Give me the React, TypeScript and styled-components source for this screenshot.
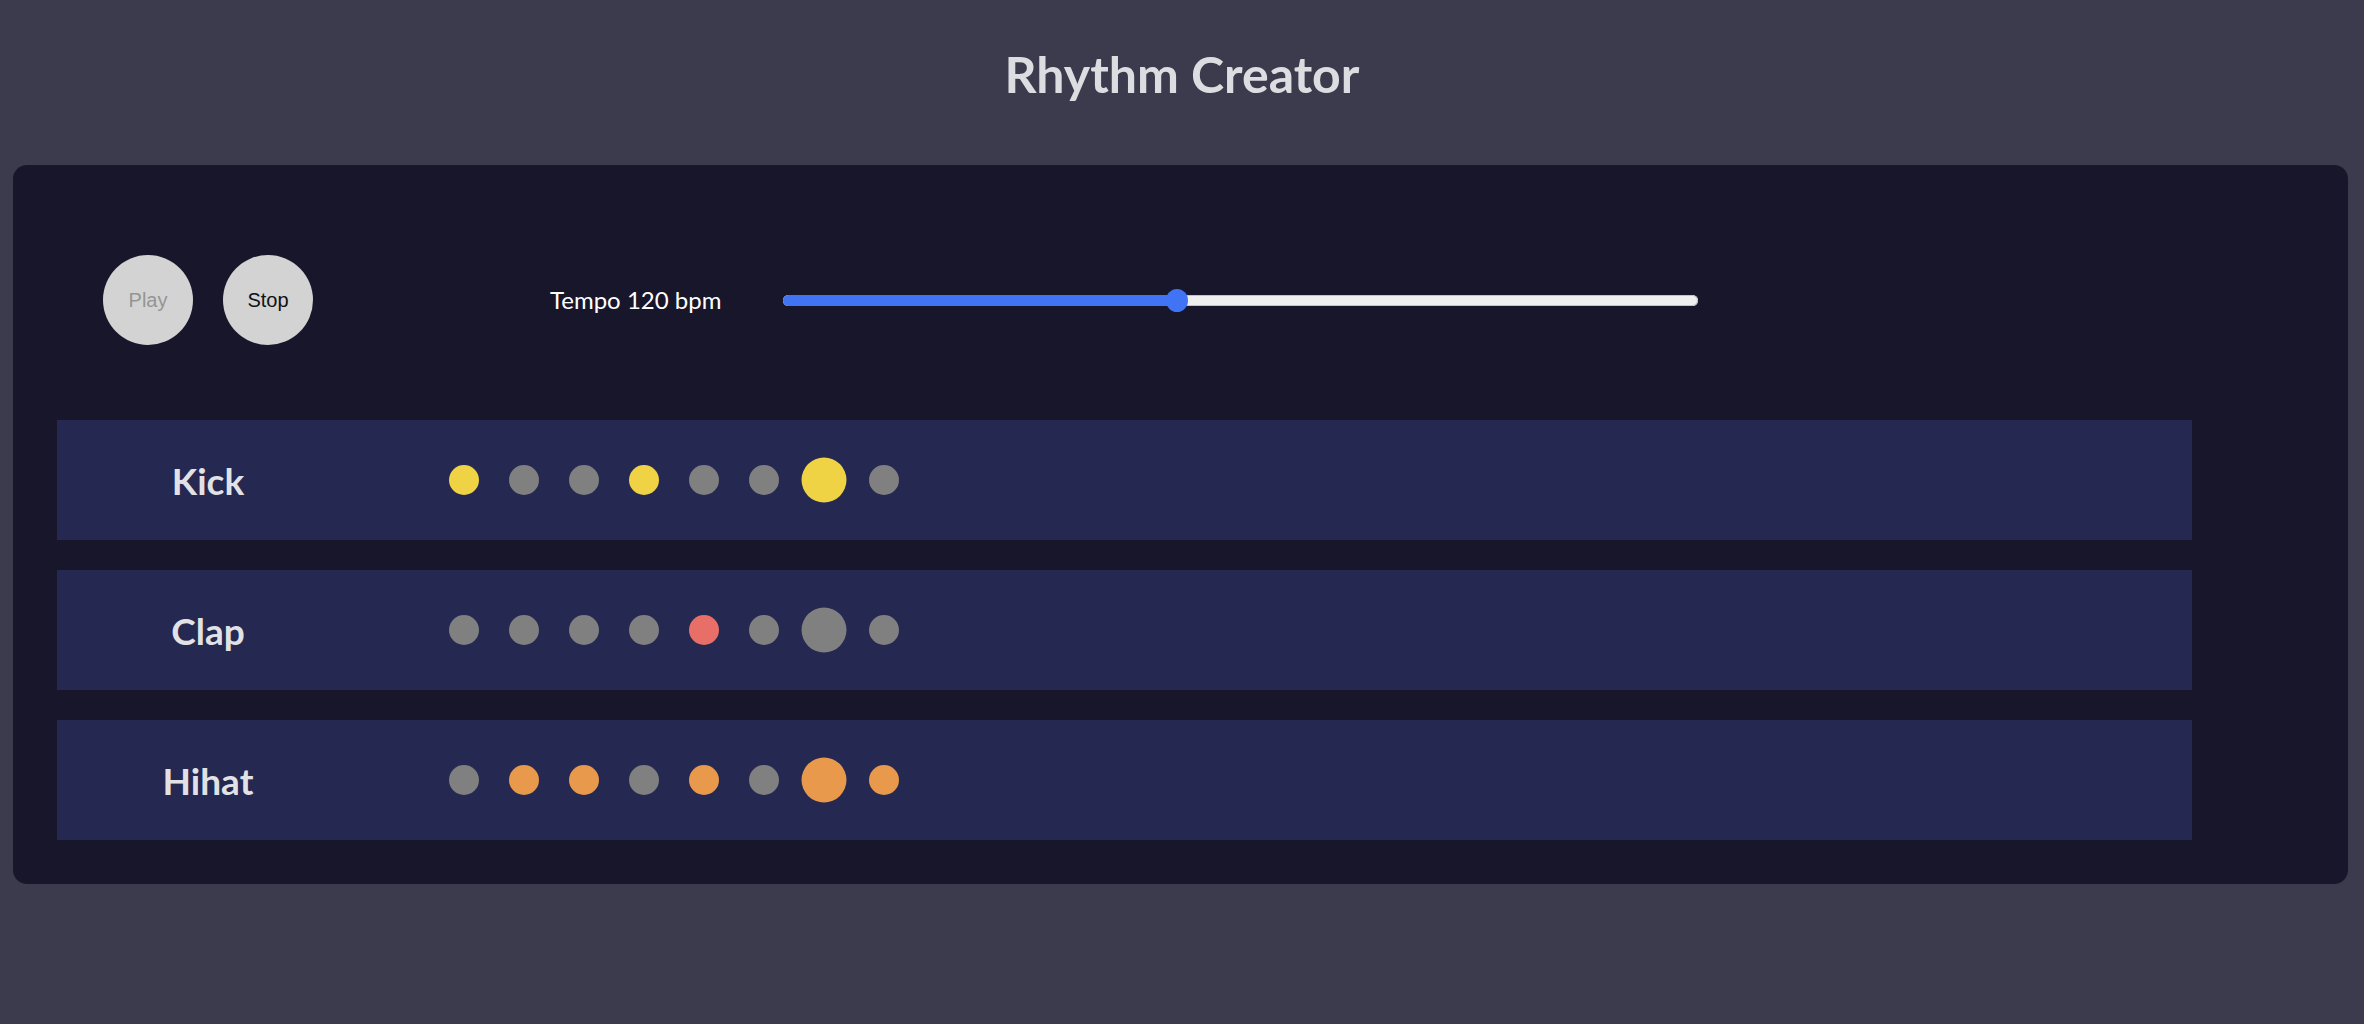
import React from "react";
import styled, { createGlobalStyle } from "styled-components";

const GlobalStyle = createGlobalStyle`
  html, body {
    margin: 0;
    padding: 0;
    background: #3c3b4e;
    font-family: "Lato", "Open Sans", sans-serif;
  }
`;

const Page = styled.div`
  width: 2364px;
  min-height: 1024px;
  display: flex;
  flex-direction: column;
`;

const Header = styled.header`
  height: 165px;
  display: flex;
  justify-content: center;
  align-items: flex-start;
`;

const Title = styled.h1`
  margin: 44px 0 0;
  font-size: 50px;
  line-height: 60px;
  font-weight: 700;
  color: #dcdde0;
`;

const Panel = styled.main`
  margin: 0 16px 0 13px;
  background: #17162a;
  border-radius: 14px;
  padding: 90px 44px 44px;
  display: flex;
  flex-direction: column;
`;

const Controls = styled.div`
  display: flex;
  align-items: center;
  padding-left: 46px;
  height: 90px;
  margin-bottom: 75px;
`;

const RoundButton = styled.button<{ $muted?: boolean }>`
  width: 90px;
  height: 90px;
  border-radius: 50%;
  border: none;
  padding: 0;
  background: #d3d3d3;
  color: ${(p) => (p.$muted ? "#959595" : "#111111")};
  font-family: "Liberation Sans", Arial, sans-serif;
  font-size: 20px;
  & + & {
    margin-left: 30px;
  }
`;

const TempoLabel = styled.span`
  margin-left: 237px;
  color: #ffffff;
  font-size: 24px;
  line-height: 30px;
  width: 172px;
  white-space: nowrap;
`;

const Track = styled.div`
  position: relative;
  margin-left: 61px;
  width: 915px;
  height: 11px;
  border-radius: 6px;
  background: #efefef;
  box-shadow: inset 0 0 0 1px #c4c4c4;
`;

const Fill = styled.div`
  height: 100%;
  border-radius: 6px 0 0 6px;
  background: #4173f5;
`;

const Thumb = styled.div`
  position: absolute;
  top: 50%;
  width: 22px;
  height: 23px;
  margin-left: -11px;
  margin-top: -11.5px;
  border-radius: 50%;
  background: #4173f5;
`;

const Rows = styled.div`
  display: flex;
  flex-direction: column;
  gap: 30px;
`;

const Row = styled.div`
  width: 2135px;
  height: 120px;
  background: #252850;
  display: flex;
  align-items: center;
`;

const Label = styled.div`
  width: 302px;
  text-align: center;
  font-size: 37px;
  font-weight: 700;
  color: #e2e2e6;
`;

const Steps = styled.div`
  margin-left: 90px;
  display: flex;
  align-items: center;
  gap: 30px;
`;

const Dot = styled.span<{ $color: string; $current: boolean }>`
  width: 30px;
  height: 30px;
  border-radius: 50%;
  background: ${(p) => p.$color};
  transform: ${(p) => (p.$current ? "scale(1.5)" : "none")};
`;

const tracks = [
  { name: "Kick", color: "#f0d245", steps: [1, 0, 0, 1, 0, 0, 1, 0] },
  { name: "Clap", color: "#e86f68", steps: [0, 0, 0, 0, 1, 0, 0, 0] },
  { name: "Hihat", color: "#e8994c", steps: [0, 1, 1, 0, 1, 0, 1, 1] },
];

const currentStep = 6;
const tempo = 120;
const minTempo = 60;
const maxTempo = 200;

export default function App() {
  const trackWidth = 915;
  const thumb = 22;
  const frac = (tempo - minTempo) / (maxTempo - minTempo);
  const thumbCenter = thumb / 2 + frac * (trackWidth - thumb);
  return (
    <Page>
      <GlobalStyle />
      <Header>
        <Title>Rhythm Creator</Title>
      </Header>
      <Panel>
        <Controls>
          <RoundButton $muted disabled>
            Play
          </RoundButton>
          <RoundButton>Stop</RoundButton>
          <TempoLabel>Tempo {tempo} bpm</TempoLabel>
          <Track>
            <Fill style={{ width: `${thumbCenter}px` }} />
            <Thumb style={{ left: `${thumbCenter}px` }} />
          </Track>
        </Controls>
        <Rows>
          {tracks.map((t) => (
            <Row key={t.name}>
              <Label>{t.name}</Label>
              <Steps>
                {t.steps.map((on, i) => (
                  <Dot
                    key={i}
                    $color={on ? t.color : "#808080"}
                    $current={i === currentStep}
                  />
                ))}
              </Steps>
            </Row>
          ))}
        </Rows>
      </Panel>
    </Page>
  );
}
